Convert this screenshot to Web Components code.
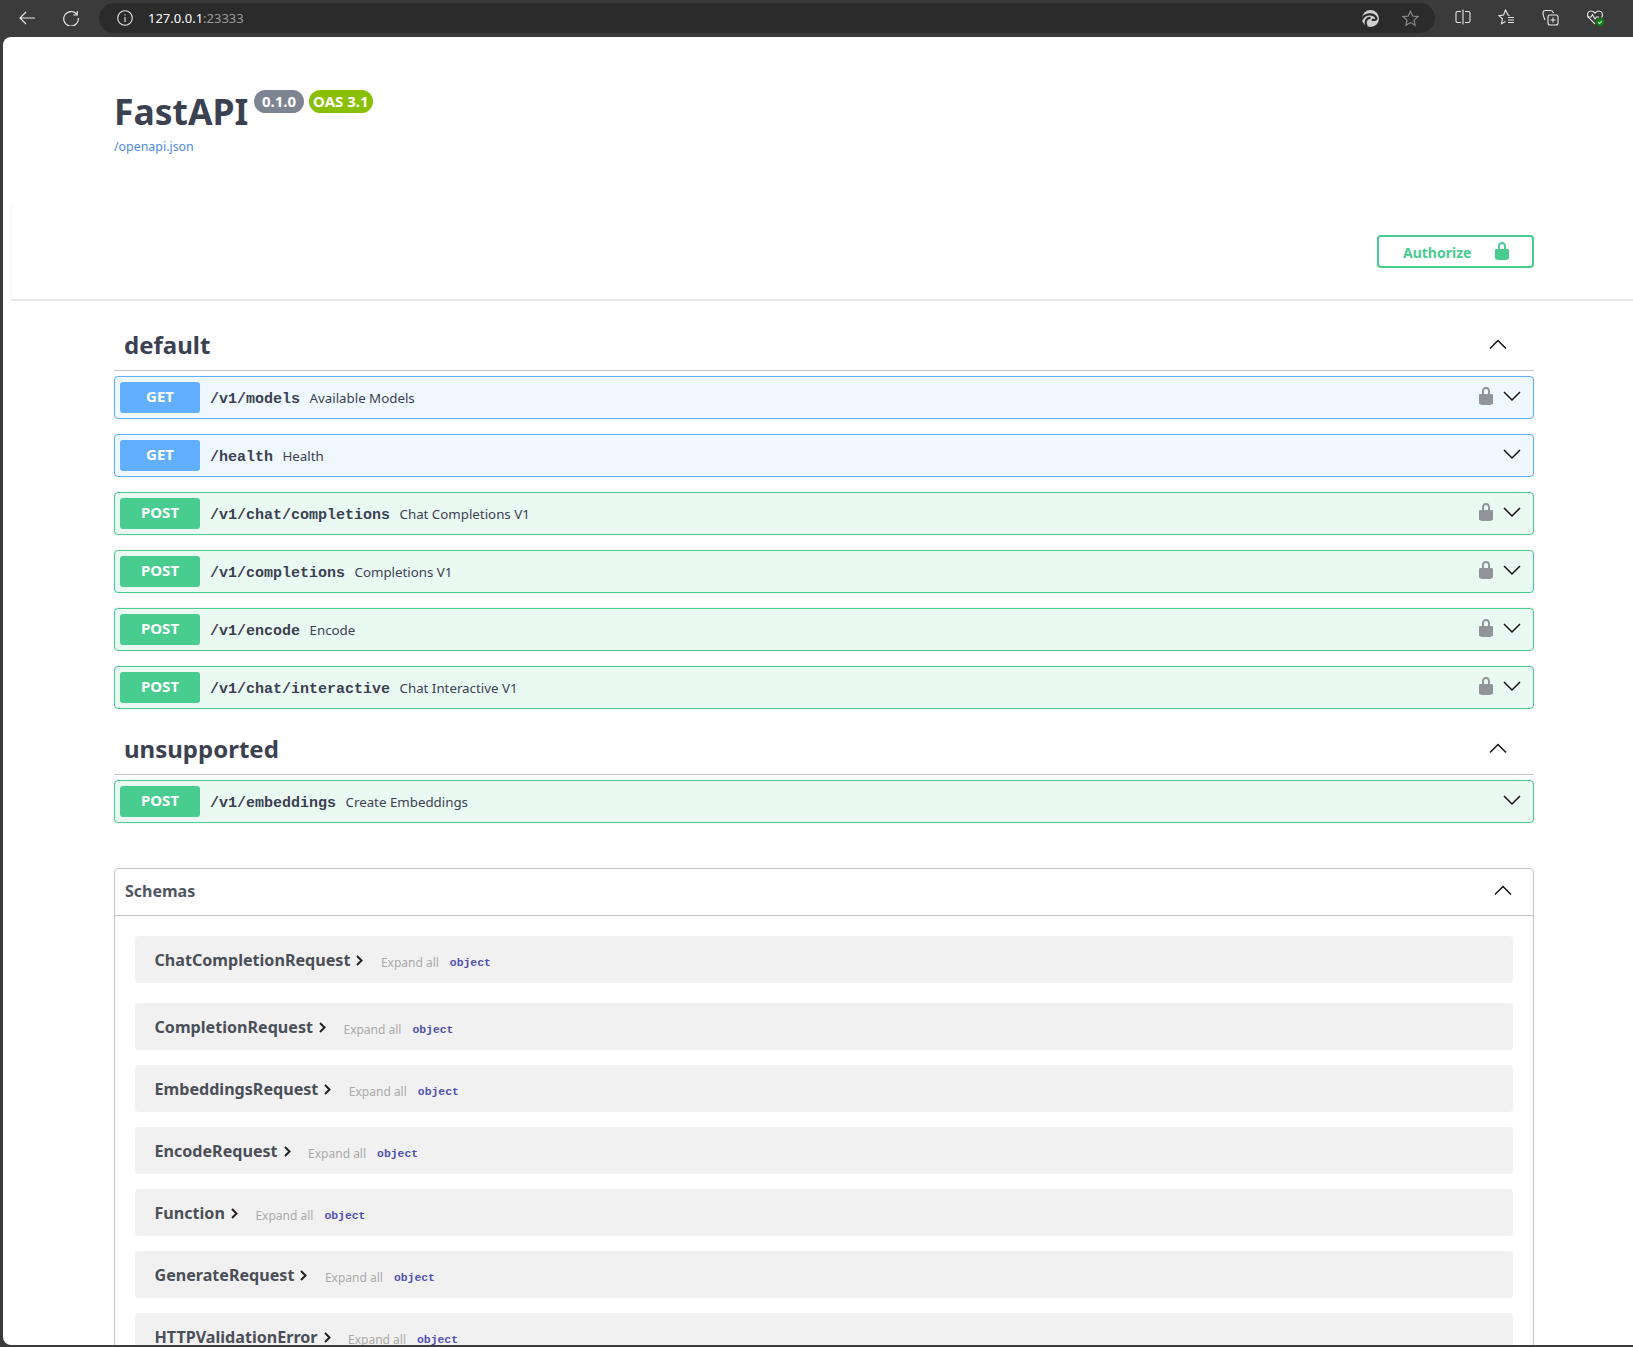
<!DOCTYPE html>
<html lang="en">
<head>
<meta charset="utf-8">
<title>FastAPI - Swagger UI</title>
<style>
    html, body { margin: 0; height: 1347px; overflow: hidden; }
    body {
        background: #3b3b3b;
        font-family: "Noto Sans", "Open Sans", sans-serif;
        color: #3b4151;
    }
    .page {
        margin: 0 0 2px 3px;
        height: 1308px;
        padding-left: 8px;
        box-sizing: border-box;
        background: #fff;
        border-radius: 8px 0 0 8px;
        overflow: hidden;
    }
    .wrapper { margin-left: 103px; width: 1420px; }
</style>
</head>
<body>
<browser-toolbar></browser-toolbar>
<div class="page">
    <swagger-info></swagger-info>
    <auth-bar></auth-bar>
    <div class="wrapper">
        <op-section style="margin-top:19px" label="default">
            <op-row method="GET" path="/v1/models" summary="Available Models" locked></op-row>
            <op-row method="GET" path="/health" summary="Health"></op-row>
            <op-row method="POST" path="/v1/chat/completions" summary="Chat Completions V1" locked></op-row>
            <op-row method="POST" path="/v1/completions" summary="Completions V1" locked></op-row>
            <op-row method="POST" path="/v1/encode" summary="Encode" locked></op-row>
            <op-row method="POST" path="/v1/chat/interactive" summary="Chat Interactive V1" locked></op-row>
        </op-section>
        <op-section label="unsupported">
            <op-row method="POST" path="/v1/embeddings" summary="Create Embeddings"></op-row>
        </op-section>
        <schemas-panel>
            <model-row style="margin-bottom:20px" name="ChatCompletionRequest"></model-row>
            <model-row name="CompletionRequest"></model-row>
            <model-row name="EmbeddingsRequest"></model-row>
            <model-row name="EncodeRequest"></model-row>
            <model-row name="Function"></model-row>
            <model-row name="GenerateRequest"></model-row>
            <model-row name="HTTPValidationError"></model-row>
        </schemas-panel>
    </div>
</div>

<script>
const LOCK = 'M15.8 8H14V5.6C14 2.703 12.665 1 10 1 7.334 1 6 2.703 6 5.6V8H4c-.553 0-1 .646-1 1.199V17c0 .549.428 1.139.951 1.307l1.197.387C5.672 18.861 6.55 19 7.1 19h5.8c.549 0 1.428-.139 1.951-.307l1.196-.387c.524-.167.953-.757.953-1.306V9.199C17 8.646 16.352 8 15.8 8zM12 8H8V5.199C8 3.754 8.797 3 10 3c1.203 0 2 .754 2 2.199V8z';

function lockIcon(color, size) {
    return `<svg width="${size}" height="${size}" viewBox="0 0 20 20" fill="${color}"><path fill-rule="evenodd" d="${LOCK}"/></svg>`;
}

function chevron(up) {
    const pts = up ? '1,9.5 9,1.5 17,9.5' : '1,1 9,9 17,1';
    return `<svg width="18" height="11" viewBox="0 0 18 11" fill="none" stroke="#111" stroke-width="1.5"><polyline points="${pts}"/></svg>`;
}

class BrowserToolbar extends HTMLElement {
    connectedCallback() {
        this.attachShadow({ mode: 'open' }).innerHTML = `
            <style>
                :host { display: flex; align-items: center; height: 37px; box-sizing: border-box; padding: 0 0 1px 19px; background: #3b3b3b; }
                svg { display: block; flex: none; }
                .nav { margin-right: 28px; }
                .addr {
                    display: flex; align-items: center; width: 1336px; height: 30px; margin-left: -8px;
                    padding: 0 16px 0 18px; box-sizing: border-box; background: #2b2b2b; border-radius: 15px;
                    font: 13px "Noto Sans", sans-serif; color: #fff;
                }
                .addr span { color: #9a9a9a; }
                .url { margin-left: 15px; flex: 1; }
                .tools { display: flex; gap: 27px; margin-left: 20px; }
            </style>
            <svg class="nav" width="16" height="16" viewBox="0 0 16 16" fill="none" stroke="#e6e6e6" stroke-width="1.2"><path d="M16 8H1M7 2 1 8l6 6"/></svg>
            <svg class="nav" width="16" height="16" viewBox="0 0 16 16" fill="none" stroke="#e6e6e6" stroke-width="1.2"><path d="M14 4.6A7.3 7.3 0 1 0 15.3 8"/><path d="M14.3 1v4h-4"/></svg>
            <div class="addr">
                <svg width="16" height="16" viewBox="0 0 16 16" fill="none" stroke="#e6e6e6" stroke-width="1.1"><circle cx="8" cy="8" r="7.3"/><path d="M8 7v5M8 4.2v1.4"/></svg>
                <div class="url">127.0.0.1<span>:23333</span></div>
                <svg width="17" height="17" viewBox="0 0 16 16"><circle cx="8" cy="8" r="8" fill="#cfcfcf"/><path d="M0 9C2 3 11 2.500 13.500 7.500c.5 2-3 2.500-4 1.200M4.500 15.500C2 11 4.500 7 8 7.500" fill="none" stroke="#2b2b2b" stroke-width="2"/></svg>
                <svg style="margin-left:23px" width="17" height="17" viewBox="0 0 17 17" fill="none" stroke="#8a8a8a" stroke-width="1.2"><path d="M8.5 1.2 10.7 6l5.2.6-3.9 3.5 1.1 5.2-4.6-2.7-4.6 2.7 1.1-5.2L1.1 6.6 6.3 6z"/></svg>
            </div>
            <div class="tools">
                <svg width="16" height="16" viewBox="0 0 16 16" fill="none" stroke="#e6e6e6" stroke-width="1.1"><path d="M6 2.5H2.5a1.5 1.5 0 0 0-1.5 1.5v8a1.5 1.5 0 0 0 1.5 1.5H6M10 2.5h3.5A1.500 1.500 0 0 1 15 4v8a1.500 1.500 0 0 1-1.500 1.500H10M8 .5v15"/></svg>
                <svg width="17" height="17" viewBox="0 0 17 17" fill="none" stroke="#e6e6e6" stroke-width="1.1"><path d="M11.500 6.500 10 6 7.500 1 5.600 6 1 6.600l3.400 3.200-.9 5 4-2.300M10 8.500h6M10 11h6M10 13.500h6"/></svg>
                <svg width="17" height="17" viewBox="0 0 17 17" fill="none" stroke="#e6e6e6" stroke-width="1.1"><rect x="6" y="6" width="10" height="10" rx="2"/><path d="M11 8.500v5M8.500 11h5M3 11C1.500 8 1 6 1 4c0-1.500 1-2.500 2.500-2.500h5c1.500 0 2.500 1 3 2.500"/></svg>
                <svg width="19" height="18" viewBox="0 0 19 18" fill="none" stroke="#e6e6e6" stroke-width="1.1"><path d="M9 15 2.500 8.500C.5 6 1.500 2 5 2c1.800 0 3 1 4 2 1-1 2.200-2 4-2 3.500 0 4.500 4 2.500 6.500"/><path d="M1.500 8h3.500l1.500-2.500L9 10l1.500-2h2.500"/><circle cx="14" cy="13" r="4.300" fill="#107c10" stroke="none"/><path d="M12 13l1.500 1.500 2.500-2.500" stroke="#b5e0b5"/></svg>
            </div>`;
    }
}

class SwaggerInfo extends HTMLElement {
    connectedCallback() {
        this.attachShadow({ mode: 'open' }).innerHTML = `
            <style>
                :host { display: block; height: 168px; box-sizing: border-box; padding: 50px 0 0 103px; }
                .title { display: flex; align-items: flex-start; height: 48px; }
                h1 { margin: 0; font-size: 35.5px; font-weight: 700; line-height: 48px; color: #3b4151; }
                .badge {
                    margin: 3px 0 0 5px; height: 23px; padding: 0 7.5px; border-radius: 12px;
                    font-size: 15px; font-weight: 700; line-height: 23px; color: #fff; background: #7d8492;
                }
                .oas { background: #89bf04; padding: 0 4.5px; }
                a { display: block; margin-top: 3px; font-size: 12.4px; color: #4d8ae8; text-decoration: none; }
            </style>
            <div class="title"><h1>FastAPI</h1><span class="badge" style="margin-left:6px">0.1.0</span><span class="badge oas">OAS 3.1</span></div>
            <a href="#">/openapi.json</a>`;
    }
}

class AuthBar extends HTMLElement {
    connectedCallback() {
        this.attachShadow({ mode: 'open' }).innerHTML = `
            <style>
                :host {
                    display: flex; justify-content: flex-end; box-sizing: border-box; height: 96px;
                    padding: 30px 99px 0 0; border-bottom: 2px solid #e8e8e8; border-left: 1px solid #f4f4f4;
                }
                .btn {
                    display: flex; align-items: center; box-sizing: border-box; width: 157px; height: 33px; padding: 1px 0 0 24px;
                    border: 2px solid #49cc90; border-radius: 4px; color: #49cc90; font-size: 14px; font-weight: 700;
                }
                svg { margin: -2px 0 0 21px; }
            </style>
            <div class="btn">Authorize${lockIcon('#49cc90', 20)}</div>`;
    }
}

class OpSection extends HTMLElement {
    connectedCallback() {
        this.attachShadow({ mode: 'open' }).innerHTML = `
            <style>
                :host { display: block; }
                .head {
                    display: flex; align-items: center; justify-content: space-between; height: 49px;
                    padding: 0 27px 1px 10px; margin-bottom: 5px; border-bottom: 1px solid #c4c4c8;
                }
                h3 { margin: 0 0 1px; font-size: 24px; font-weight: 700; color: #3b4151; }
                svg { display: block; margin-bottom: 1px; }
            </style>
            <div class="head"><h3>${this.getAttribute('label')}</h3>${chevron(true)}</div>
            <slot></slot>`;
    }
}

class OpRow extends HTMLElement {
    connectedCallback() {
        const method = this.getAttribute('method');
        const get = method === 'GET';
        const lock = this.hasAttribute('locked') ? lockIcon('#919499', 20) : '';
        this.attachShadow({ mode: 'open' }).innerHTML = `
            <style>
                :host { display: block; margin-bottom: 15px; }
                .op {
                    display: flex; align-items: center; box-sizing: border-box; height: 43px; padding: 0 12px 0 5px;
                    border: 1px solid ${get ? '#61affe' : '#49cc90'}; border-radius: 4px;
                    background: ${get ? '#eff7ff' : '#ebf9f3'};
                    box-shadow: 0 0 2px rgba(0,0,0,.12);
                }
                .method {
                    width: 80px; height: 31px; line-height: 29px; text-align: center; border-radius: 3px; flex: none;
                    background: ${get ? '#61affe' : '#49cc90'}; color: #fff; font-size: 15px; font-weight: 700;
                }
                .path { margin: 3px 0 0 10px; font: 700 15px "Liberation Mono", monospace; color: #3b4151; }
                .summary { margin-left: 9.5px; font-size: 13.3px; color: #3b4151; }
                .end { margin-left: auto; display: flex; align-items: center; gap: 7px; }
                .end svg { display: block; margin-top: -2px; }
                .end svg:first-child:not(:last-child) { margin-top: -4px; }
            </style>
            <div class="op">
                <span class="method">${method}</span>
                <span class="path">${this.getAttribute('path')}</span>
                <span class="summary">${this.getAttribute('summary')}</span>
                <span class="end">${lock}${chevron(false)}</span>
            </div>`;
    }
}

class SchemasPanel extends HTMLElement {
    connectedCallback() {
        this.attachShadow({ mode: 'open' }).innerHTML = `
            <style>
                :host { display: block; margin-top: 45px; border: 1px solid #c4c4c8; border-radius: 4px; }
                .head {
                    display: flex; align-items: center; justify-content: space-between; height: 43px;
                    padding: 0 21px 3px 10px; font-size: 16px; font-weight: 700; color: #505560;
                }
                .body { border-top: 1px solid #c4c4c8; padding: 20px; }
                svg { display: block; }
            </style>
            <div class="head"><span>Schemas</span>${chevron(true)}</div>
            <div class="body"><slot></slot></div>`;
    }
}

class ModelRow extends HTMLElement {
    connectedCallback() {
        this.attachShadow({ mode: 'open' }).innerHTML = `
            <style>
                :host { display: block; margin-bottom: 15px; }
                .row {
                    display: flex; align-items: center; height: 47px; padding-left: 19.5px; box-sizing: border-box;
                    background: #f1f1f1; border-radius: 4px;
                }
                .name { font-size: 16.1px; font-weight: 700; color: #4b4f58; }
                svg { display: block; margin: 2px 17.5px 0 6px; }
                .expand { font-size: 12px; color: #aaa; margin-top: 5px; }
                .type { margin: 6px 0 0 11px; font: 700 11.4px "Liberation Mono", monospace; color: #5050b0; }
            </style>
            <div class="row">
                <span class="name">${this.getAttribute('name')}</span>
                <svg width="7" height="11" viewBox="0 0 7 11" fill="none" stroke="#222" stroke-width="2"><path d="M1 1l4.500 4.500L1 10"/></svg>
                <span class="expand">Expand all</span>
                <span class="type">object</span>
            </div>`;
    }
}

customElements.define('browser-toolbar', BrowserToolbar);
customElements.define('swagger-info', SwaggerInfo);
customElements.define('auth-bar', AuthBar);
customElements.define('op-section', OpSection);
customElements.define('op-row', OpRow);
customElements.define('schemas-panel', SchemasPanel);
customElements.define('model-row', ModelRow);
</script>
</body>
</html>
